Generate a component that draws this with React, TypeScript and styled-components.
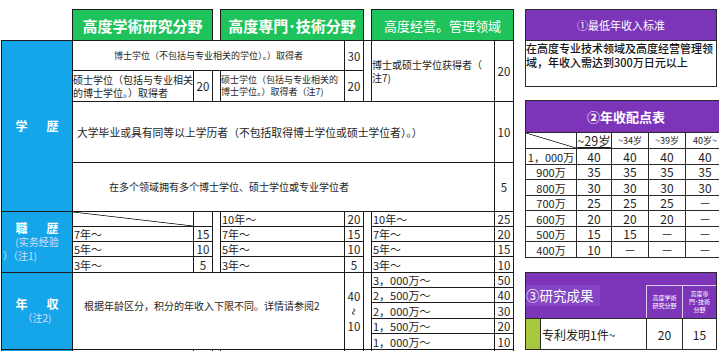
import React from 'react';
import styled, { createGlobalStyle } from 'styled-components';

const GlobalStyle = createGlobalStyle`
  html, body {
    margin: 0;
    padding: 0;
    background: #ffffff;
  }
  body {
    font-family: "Noto Sans CJK SC", "Noto Sans CJK JP", sans-serif;
    color: #1e1e1e;
  }
`;

const Sheet = styled.div`
  display: flex;
  align-items: flex-start;
  width: 719px;
  height: 351px;
  overflow: hidden;
  background: #ffffff;
`;

/* ---------- left: points table ---------- */

const LeftBlock = styled.div`
  display: flex;
  flex-direction: column;
  margin: 9px 0 0 1px;
`;

const HeadRow = styled.div`
  display: flex;
  gap: 7px;
  height: 31px;
  padding-left: 71px;
`;

const FieldHead = styled.div<{ $w: number; $light?: boolean }>`
  box-sizing: border-box;
  width: ${p => p.$w}px;
  display: flex;
  align-items: center;
  justify-content: center;
  background: #1fc35b;
  border: 1px solid #1b1b1b;
  border-bottom: none;
  color: #ffffff;
  font-family: "Noto Sans CJK JP", "Noto Sans CJK SC", sans-serif;
  font-size: ${p => (p.$light ? 13 : 15)}px;
  font-weight: ${p => (p.$light ? 400 : 700)};
  white-space: nowrap;
`;

const Grid = styled.div`
  display: grid;
  grid-template-columns: 70px 120px 18px 7px 123px 18px 7px 122px 18px;
  grid-template-rows: 29px 30px 60px 48px 14px 14px 14px 15px 14px 14px 15px 14px 15px 20px;
  gap: 1px;
  padding: 1px;
  background: #1b1b1b;
`;

const Cell = styled.div<{ $c: string; $r: string }>`
  grid-column: ${p => p.$c};
  grid-row: ${p => p.$r};
  min-width: 0;
  display: flex;
  align-items: center;
  background: #ffffff;
`;

const Text = styled(Cell)<{ $size?: number; $lh?: number; $pad?: string; $center?: boolean }>`
  justify-content: ${p => (p.$center ? 'center' : 'flex-start')};
  padding: ${p => p.$pad ?? '0'};
  font-size: ${p => p.$size ?? 10}px;
  line-height: ${p => p.$lh ?? 12}px;
  white-space: nowrap;
  color: #1e1e1e;
`;

const Pts = styled(Cell)`
  flex-direction: column;
  justify-content: center;
  font-size: 11.5px;
  line-height: 12px;
  color: #1e1e1e;
`;

const PtsStack = styled(Pts)`
  line-height: 15px;
`;

const Diag = styled(Cell)`
  background: linear-gradient(
    to top right,
    #ffffff calc(50% - 0.8px),
    #222222 50%,
    #ffffff calc(50% + 0.8px)
  );
`;

const Label = styled(Cell)`
  flex-direction: column;
  justify-content: center;
  align-items: stretch;
  background: #14a6e9;
  color: #ffffff;
`;

const LabelMain = styled.div`
  display: flex;
  justify-content: center;
  gap: 19px;
  font-family: "Noto Sans CJK JP", "Noto Sans CJK SC", sans-serif;
  font-size: 12px;
  font-weight: 700;
  line-height: 14px;
`;

const LabelNote = styled.div<{ $left?: boolean }>`
  padding-left: ${p => (p.$left ? 1 : 0)}px;
  text-align: ${p => (p.$left ? 'left' : 'center')};
  font-size: 10px;
  line-height: 14px;
  color: #d6dcff;
  white-space: nowrap;
`;

const Wave = styled.span`
  display: inline-block;
  transform: rotate(90deg) scale(1.2);
`;

/* ---------- right: info panels ---------- */

const RightCol = styled.div`
  display: flex;
  flex-direction: column;
  width: 192px;
  margin: 9px 0 0 11px;
`;

const Panel = styled.div<{ $w?: number; $mt?: number }>`
  box-sizing: border-box;
  width: ${p => p.$w ?? 192}px;
  margin-top: ${p => p.$mt ?? 0}px;
  border: 1px solid #2a2a2a;
  background: #ffffff;
`;

const PanelHead = styled.div<{ $h: number; $size: number; $bold?: boolean }>`
  height: ${p => p.$h}px;
  display: flex;
  align-items: center;
  justify-content: center;
  background: #7c35b9;
  border-bottom: 1px solid #2a2a2a;
  color: #ffffff;
  font-size: ${p => p.$size}px;
  font-weight: ${p => (p.$bold ? 700 : 400)};
`;

const PanelBody = styled.div`
  height: 45px;
  font-size: 11px;
  line-height: 14px;
  font-weight: 500;
  color: #151515;
`;

const ScoreGrid = styled.div`
  display: grid;
  grid-template-columns: 50px 34px 36px 36px 38px;
  grid-template-rows: 15px 15px 14px 15px 14px 15px 14px 15px;
  gap: 1px;
  background: #2a2a2a;
`;

const Score = styled.div<{ $size?: number; $mark?: boolean }>`
  display: flex;
  align-items: center;
  justify-content: center;
  background: #ffffff;
  font-size: ${p => p.$size ?? 12}px;
  line-height: 12px;
  white-space: nowrap;
  color: #1e1e1e;
  text-decoration: ${p => (p.$mark ? 'underline' : 'none')};
  text-underline-offset: 1px;
`;

const ScoreCorner = styled.div`
  background: linear-gradient(
    to top right,
    #ffffff calc(50% - 0.8px),
    #222222 50%,
    #ffffff calc(50% + 0.8px)
  );
`;

const ResearchTop = styled.div`
  display: flex;
  align-items: stretch;
  height: 45px;
  background: #7c35b9;
`;

const ResearchTitle = styled.div`
  flex: 1;
  display: flex;
  align-items: center;
`;

const TitleMark = styled.span`
  padding: 2px 6px 2px 0;
  background: #8646c3;
  color: #ffffff;
  font-size: 13.5px;
  line-height: 17px;
`;

const SubHead = styled.div<{ $w: number }>`
  box-sizing: border-box;
  align-self: flex-end;
  width: ${p => p.$w}px;
  height: 33px;
  display: flex;
  align-items: center;
  justify-content: center;
  border-left: 1px solid rgba(255, 255, 255, 0.75);
  border-top: 1px solid rgba(255, 255, 255, 0.75);
  color: #ffffff;
  font-family: "Noto Sans CJK JP", "Noto Sans CJK SC", sans-serif;
  font-size: 6px;
  line-height: 8px;
  text-align: center;
`;

const ResearchRow = styled.div`
  display: flex;
  height: 30px;
  border-top: 1px solid #2a2a2a;
`;

const Bar = styled.div`
  width: 14px;
  background: #a7c83c;
`;

const RowText = styled.div`
  flex: 1;
  display: flex;
  align-items: center;
  padding-left: 1px;
  border-left: 1px solid #2a2a2a;
  font-size: 12px;
  color: #1a1a1a;
`;

const RowVal = styled.div<{ $w: number }>`
  box-sizing: border-box;
  width: ${p => p.$w}px;
  display: flex;
  align-items: center;
  justify-content: center;
  border-left: 1px solid #2a2a2a;
  font-size: 12px;
  color: #1a1a1a;
`;

const career = [
  { a: null, b: ['10年～', '20'], c: ['10年～', '25'] },
  { a: ['7年～', '15'], b: ['7年～', '15'], c: ['7年～', '20'] },
  { a: ['5年～', '10'], b: ['5年～', '10'], c: ['5年～', '15'] },
  { a: ['3年～', '5'], b: ['3年～', '5'], c: ['3年～', '10'] },
];

const income = [
  ['3，000万～', '50'],
  ['2，500万～', '40'],
  ['2，000万～', '30'],
  ['1，500万～', '20'],
  ['1，000万～', '10'],
];

const ages = ['~34岁', '~39岁', '40岁~'];

const scores = [
  ['1，000万', '40', '40', '40', '40'],
  ['900万', '35', '35', '35', '35'],
  ['800万', '30', '30', '30', '30'],
  ['700万', '25', '25', '25', '－'],
  ['600万', '20', '20', '20', '－'],
  ['500万', '15', '15', '－', '－'],
  ['400万', '10', '－', '－', '－'],
];

const App: React.FC = () => {
  return (
    <>
      <GlobalStyle />
      <Sheet>
        <LeftBlock>
          <HeadRow>
            <FieldHead $w={141}>高度学術研究分野</FieldHead>
            <FieldHead $w={144}>高度専門･技術分野</FieldHead>
            <FieldHead $w={143} $light>高度经营。管理领域</FieldHead>
          </HeadRow>

          <Grid>
            {/* 学歴 */}
            <Label $c="1" $r="1 / 5">
              <LabelMain><span>学</span><span>歴</span></LabelMain>
            </Label>

            <Text $c="2 / 6" $r="1" $size={9} $center>
              博士学位（不包括与专业相关的学位）。）取得者
            </Text>
            <Pts $c="6" $r="1">30</Pts>
            <Cell $c="7" $r="1 / 3" />
            <Text $c="8" $r="1 / 3" $size={10} $lh={13}>
              <div>博士或硕士学位获得者（<br />注7)</div>
            </Text>
            <Pts $c="9" $r="1 / 3">20</Pts>

            <Text $c="2" $r="2" $size={10} $lh={13}>
              <div>硕士学位（包括与专业相关<br />的博士学位。）取得者</div>
            </Text>
            <Pts $c="3" $r="2">20</Pts>
            <Cell $c="4" $r="2" />
            <Text $c="5" $r="2" $size={9} $lh={12}>
              <div>硕士学位（包括与专业相关的<br />博士学位。）取得者（注7)</div>
            </Text>
            <Pts $c="6" $r="2">20</Pts>

            <Text $c="2 / 9" $r="3" $size={10.8} $pad="0 0 0 4px">
              大学毕业或具有同等以上学历者（不包括取得博士学位或硕士学位者）。）
            </Text>
            <Pts $c="9" $r="3">10</Pts>

            <Text $c="2 / 9" $r="4" $size={10} $pad="0 0 0 36px">
              在多个领域拥有多个博士学位、硕士学位或专业学位者
            </Text>
            <Pts $c="9" $r="4">5</Pts>

            {/* 職歴 */}
            <Label $c="1" $r="5 / 9">
              <LabelMain><span>職</span><span>歴</span></LabelMain>
              <LabelNote>(实务经验</LabelNote>
              <LabelNote $left>）（注1)</LabelNote>
            </Label>
            <Cell $c="4" $r="5 / 9" />
            <Cell $c="7" $r="5 / 9" />
            {career.map((row, i) => {
              const r = String(5 + i);
              return (
                <React.Fragment key={r}>
                  {row.a ? (
                    <>
                      <Text $c="2" $r={r} $size={11} $pad="0 0 0 1px">{row.a[0]}</Text>
                      <Pts $c="3" $r={r}>{row.a[1]}</Pts>
                    </>
                  ) : (
                    <>
                      <Diag $c="2" $r={r} />
                      <Cell $c="3" $r={r} />
                    </>
                  )}
                  <Text $c="5" $r={r} $size={11} $pad="0 0 0 1px">{row.b[0]}</Text>
                  <Pts $c="6" $r={r}>{row.b[1]}</Pts>
                  <Text $c="8" $r={r} $size={11} $pad="0 0 0 1px">{row.c[0]}</Text>
                  <Pts $c="9" $r={r}>{row.c[1]}</Pts>
                </React.Fragment>
              );
            })}

            {/* 年収 */}
            <Label $c="1" $r="9 / 14">
              <LabelMain><span>年</span><span>収</span></LabelMain>
              <LabelNote>（注2)</LabelNote>
            </Label>
            <Text $c="2 / 6" $r="9 / 14" $size={10} $pad="0 0 10px 11px">
              根据年龄区分，积分的年收入下限不同。详情请参阅2
            </Text>
            <PtsStack $c="6" $r="9 / 14">
              <span>40</span>
              <Wave>~</Wave>
              <span>10</span>
            </PtsStack>
            <Cell $c="7" $r="9 / 14" />
            {income.map(([label, pt], i) => {
              const r = String(9 + i);
              return (
                <React.Fragment key={r}>
                  <Text $c="8" $r={r} $size={11} $pad="0 0 0 1px">{label}</Text>
                  <Pts $c="9" $r={r}>{pt}</Pts>
                </React.Fragment>
              );
            })}

            {/* next section, cut off */}
            <Label $c="1" $r="14" />
            {['2', '3', '4', '5', '6', '7', '8', '9'].map(c => (
              <Cell key={c} $c={c} $r="14" />
            ))}
          </Grid>
        </LeftBlock>

        <RightCol>
          <Panel>
            <PanelHead $h={30} $size={11}>①最低年收入标准</PanelHead>
            <PanelBody>在高度专业技术领域及高度经营管理领域，年收入需达到300万日元以上</PanelBody>
          </Panel>

          <Panel $w={202} $mt={13}>
            <PanelHead $h={31} $size={13} $bold>②年收配点表</PanelHead>
            <ScoreGrid>
              <ScoreCorner />
              <Score $size={12.5} $mark>~29岁</Score>
              {ages.map(a => (
                <Score key={a} $size={9}>{a}</Score>
              ))}
              {scores.map(row =>
                row.map((v, j) => (
                  <Score key={row[0] + j} $size={j === 0 ? 11 : 12}>{v}</Score>
                ))
              )}
            </ScoreGrid>
          </Panel>

          <Panel $mt={14}>
            <ResearchTop>
              <ResearchTitle>
                <TitleMark>③研究成果</TitleMark>
              </ResearchTitle>
              <SubHead $w={36}>高度学術<br />研究分野</SubHead>
              <SubHead $w={34}>高度専<br />門･技術<br />分野</SubHead>
            </ResearchTop>
            <ResearchRow>
              <Bar />
              <RowText>专利发明1件~</RowText>
              <RowVal $w={36}>20</RowVal>
              <RowVal $w={34}>15</RowVal>
            </ResearchRow>
          </Panel>
        </RightCol>
      </Sheet>
    </>
  );
};

export default App;
